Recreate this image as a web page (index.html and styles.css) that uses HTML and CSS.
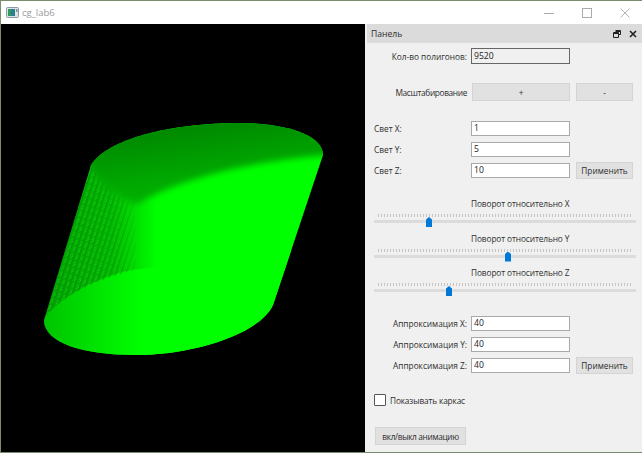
FILE: index.html
```html
<!DOCTYPE html>
<html lang="ru">
<head>
<meta charset="utf-8">
<title>cg_lab6</title>
<link rel="stylesheet" href="styles.css">
</head>
<body>
<div class="window">
  <header class="titlebar">
    <svg class="app-icon" width="13" height="13" viewBox="0 0 13 13"><rect x="0.5" y="1.5" width="12" height="10" rx="1" fill="#dfe3e6" stroke="#8a9aa5"/><rect x="2" y="3" width="7" height="7" fill="#2b7f8f"/><rect x="2" y="3" width="3" height="7" fill="#2e9a5e"/><rect x="10" y="3" width="1.5" height="3" fill="#7d8f9c"/></svg>
    <span class="app-title">cg_lab6</span>
    <div class="win-controls">
      <svg width="10" height="10" viewBox="0 0 10 10"><path d="M0 5.5H10" stroke="#aaa"/></svg>
      <svg width="10" height="10" viewBox="0 0 10 10"><rect x="0.5" y="0.5" width="9" height="9" fill="none" stroke="#aaa"/></svg>
      <svg width="10" height="10" viewBox="0 0 10 10"><path d="M0.5 0.5L9.5 9.5M9.5 0.5L0.5 9.5" stroke="#b4b4b4"/></svg>
    </div>
  </header>
  <div class="content">
    <div class="viewport">
      <svg class="scene" width="364" height="428" viewBox="0 24 364 428">
        <defs>
          <clipPath id="shape">
            <path d="M90 165C106 139 170 123 238 123C285 123 322 135 322 155L272 305C258 335 190 355 135 355C82 355 43 343 43 320Z"/>
          </clipPath>
          <linearGradient id="side" gradientUnits="userSpaceOnUse" x1="55" y1="250" x2="155" y2="250">
            <stop offset="0" stop-color="#00a400"/>
            <stop offset="0.55" stop-color="#00b800"/>
            <stop offset="1" stop-color="#00ff00"/>
          </linearGradient>
          <linearGradient id="bottom" gradientUnits="userSpaceOnUse" x1="44" y1="320" x2="140" y2="320">
            <stop offset="0" stop-color="#00c400"/>
            <stop offset="1" stop-color="#00ff00"/>
          </linearGradient>
          <linearGradient id="top" gradientUnits="userSpaceOnUse" x1="215" y1="125" x2="222" y2="178">
            <stop offset="0" stop-color="#008a00"/>
            <stop offset="1" stop-color="#00ac00"/>
          </linearGradient>
          <pattern id="moire" width="5" height="7" patternUnits="userSpaceOnUse" patternTransform="rotate(18)">
            <path d="M0.5 4L3 1.5M0.5 6.5L3 4" stroke="#2bcc2b" stroke-width="0.8"/>
            <path d="M3.6 0V7" stroke="#008e00" stroke-width="0.9"/>
          </pattern>
          <linearGradient id="fade" gradientUnits="userSpaceOnUse" x1="85" y1="240" x2="138" y2="240">
            <stop offset="0" stop-color="#fff"/>
            <stop offset="0.65" stop-color="#fff" stop-opacity="0.7"/>
            <stop offset="1" stop-color="#fff" stop-opacity="0"/>
          </linearGradient>
          <mask id="moire-mask"><rect x="40" y="150" width="110" height="180" fill="url(#fade)"/></mask>
          <filter id="soft" x="-5%" y="-10%" width="110%" height="120%"><feGaussianBlur stdDeviation="3"/></filter>
        </defs>
        <rect x="0" y="24" width="364" height="428" fill="#000"/>
        <g clip-path="url(#shape)">
          <rect x="40" y="120" width="290" height="240" fill="url(#side)"/>
          <path d="M43 320C50 305 85 280 130 270L300 250V360H40Z" fill="url(#bottom)"/>
          <path d="M43 320L90 165C100 185 112 195 133 203L137 270C85 280 50 305 43 320Z" fill="url(#moire)" mask="url(#moire-mask)"/>
          <path d="M80 165L90 150C106 125 170 115 238 115C285 115 330 125 330 155C260 160 190 174 135 204C112 195 100 185 90 165Z" fill="url(#top)" filter="url(#soft)"/>
        </g>
      </svg>
    </div>
    <aside class="panel">
      <div class="dock-title">
        <span>Панель</span>
        <div class="dock-icons">
          <svg width="8" height="8" viewBox="0 0 8 8"><path d="M2.5 .5H7.5V4.5H6M.5 2.5H5.5V7.5H.5ZM2.5 1.5H7.5M.5 3.5H5.5" fill="none" stroke="#222"/></svg>
          <svg width="8" height="8" viewBox="0 0 8 8"><path d="M1 1L7 7M7 1L1 7" stroke="#222" stroke-width="1.6"/></svg>
        </div>
      </div>
      <div class="panel-body">
        <div class="row row-count">
          <label class="lbl-r">Кол-во полигонов:</label>
          <div class="field field-ro">9520</div>
        </div>
        <div class="row row-scale">
          <label class="lbl-r tight">Масштабирование</label>
          <button class="btn btn-wide">+</button>
          <button class="btn">-</button>
        </div>
        <div class="group group-light">
          <div class="row"><label>Свет X:</label><div class="field">1</div></div>
          <div class="row"><label>Свет Y:</label><div class="field">5</div></div>
          <div class="row"><label>Свет Z:</label><div class="field">10</div><button class="btn">Применить</button></div>
        </div>
        <div class="group group-sliders">
          <div class="slider-block">
            <div class="slider-title">Поворот относительно X</div>
            <div class="slider"><span class="ticks"></span><span class="track"></span><span class="thumb" style="left:52px"></span></div>
          </div>
          <div class="slider-block">
            <div class="slider-title">Поворот относительно Y</div>
            <div class="slider"><span class="ticks"></span><span class="track"></span><span class="thumb" style="left:131px"></span></div>
          </div>
          <div class="slider-block">
            <div class="slider-title">Поворот относительно Z</div>
            <div class="slider"><span class="ticks"></span><span class="track"></span><span class="thumb" style="left:72px"></span></div>
          </div>
        </div>
        <div class="group group-approx">
          <div class="row"><label class="lbl-r">Аппроксимация X:</label><div class="field">40</div></div>
          <div class="row"><label class="lbl-r">Аппроксимация Y:</label><div class="field">40</div></div>
          <div class="row"><label class="lbl-r">Аппроксимация Z:</label><div class="field">40</div><button class="btn">Применить</button></div>
        </div>
        <div class="check"><span class="box"></span><span>Показывать каркас</span></div>
        <button class="btn btn-anim">вкл/выкл анимацию</button>
      </div>
    </aside>
  </div>
</div>
</body>
</html>
```
FILE: styles.css
```css
* { box-sizing: border-box; }
html, body { margin: 0; height: 100%; }
body {
  width: 642px;
  height: 453px;
  overflow: hidden;
  background: #7d8c6c;
  padding: 1px 0 1px 1px;
  font-family: "Open Sans", "Noto Sans", sans-serif;
  font-size: 8.3px;
  color: #2e2e2e;
}
.window { display: flex; flex-direction: column; height: 100%; background: #fff; }
.titlebar { height: 23px; flex: none; display: flex; align-items: center; padding-left: 5px; background: #fff; }
.app-title { margin-left: 3px; color: #9a9a9a; font-size: 9.5px; }
.win-controls { margin-left: auto; display: flex; gap: 28px; padding-right: 12px; }
.win-controls svg { display: block; }
.content { flex: 1; display: flex; min-height: 0; }
.viewport { width: 364px; flex: none; background: #000; }
.scene { display: block; }
.panel { width: 277px; flex: none; padding-left: 2px; background: #f0f0f0; display: flex; flex-direction: column; }
.dock-title { height: 19px; flex: none; display: flex; align-items: center; justify-content: space-between; padding: 0 5px 0 4px; background: #dbdbdb; font-size: 8.6px; }
.dock-icons { display: flex; gap: 8px; }
.dock-icons svg { display: block; }
.panel-body { padding: 5px 7px 0 7px; flex: 1; background: #f0f0f0; }
.row { display: grid; grid-template-columns: 93px 99px 59px; column-gap: 4px; align-items: center; height: 15px; }
.row .btn { margin-left: 2px; }
.row-count { height: 16px; }
.row-scale { height: 18px; margin-top: 19px; }
.row-scale .btn { height: 18px; }
.row .btn-wide { margin-left: 1px; }
label { white-space: nowrap; }
.lbl-r { text-align: right; }
.tight { letter-spacing: -0.35px; }
.field { height: 15px; background: #fff; border: 1px solid #a9a9a9; padding-left: 2px; line-height: 13px; color: #222; font-size: 8.6px; }
.field-ro { height: 16px; background: #f0f0f0; border: 1px solid #666; line-height: 14px; }
.btn { height: 17px; padding: 0; background: #e1e1e1; border: 1px solid #d4d4d4; font: inherit; color: #2e2e2e; }
.group-light { margin-top: 20px; display: flex; flex-direction: column; gap: 5.5px; }
.group-sliders { margin-top: 21px; display: flex; flex-direction: column; gap: 5.5px; }
.slider-block { display: flex; flex-direction: column; }
.slider-title { height: 12px; line-height: 12px; padding-left: 97px; letter-spacing: -0.1px; }
.slider { position: relative; height: 17px; width: 262px; }
.ticks { position: absolute; left: 4px; right: 4px; top: 4px; height: 3px; background: repeating-linear-gradient(90deg, #c4c4c4 0 1px, transparent 1px 3px); }
.track { display: block; position: absolute; left: 0; right: 0; top: 10px; height: 3px; background: #dcdcdc; }
.thumb { position: absolute; top: 7px; width: 6px; height: 10px; background: #0078d7; clip-path: polygon(50% 0, 100% 25%, 100% 100%, 0 100%, 0 25%); }
.group-approx { margin-top: 20px; display: flex; flex-direction: column; gap: 5.5px; }
.check { margin-top: 22px; display: flex; align-items: center; gap: 4px; height: 12px; letter-spacing: -0.15px; }
.box { width: 12px; height: 12px; background: #fff; border: 1px solid #555; border-radius: 1px; }
.btn-anim { display: block; margin-top: 21px; margin-left: 1px; width: 91px; height: 18px; letter-spacing: -0.35px; }
```
